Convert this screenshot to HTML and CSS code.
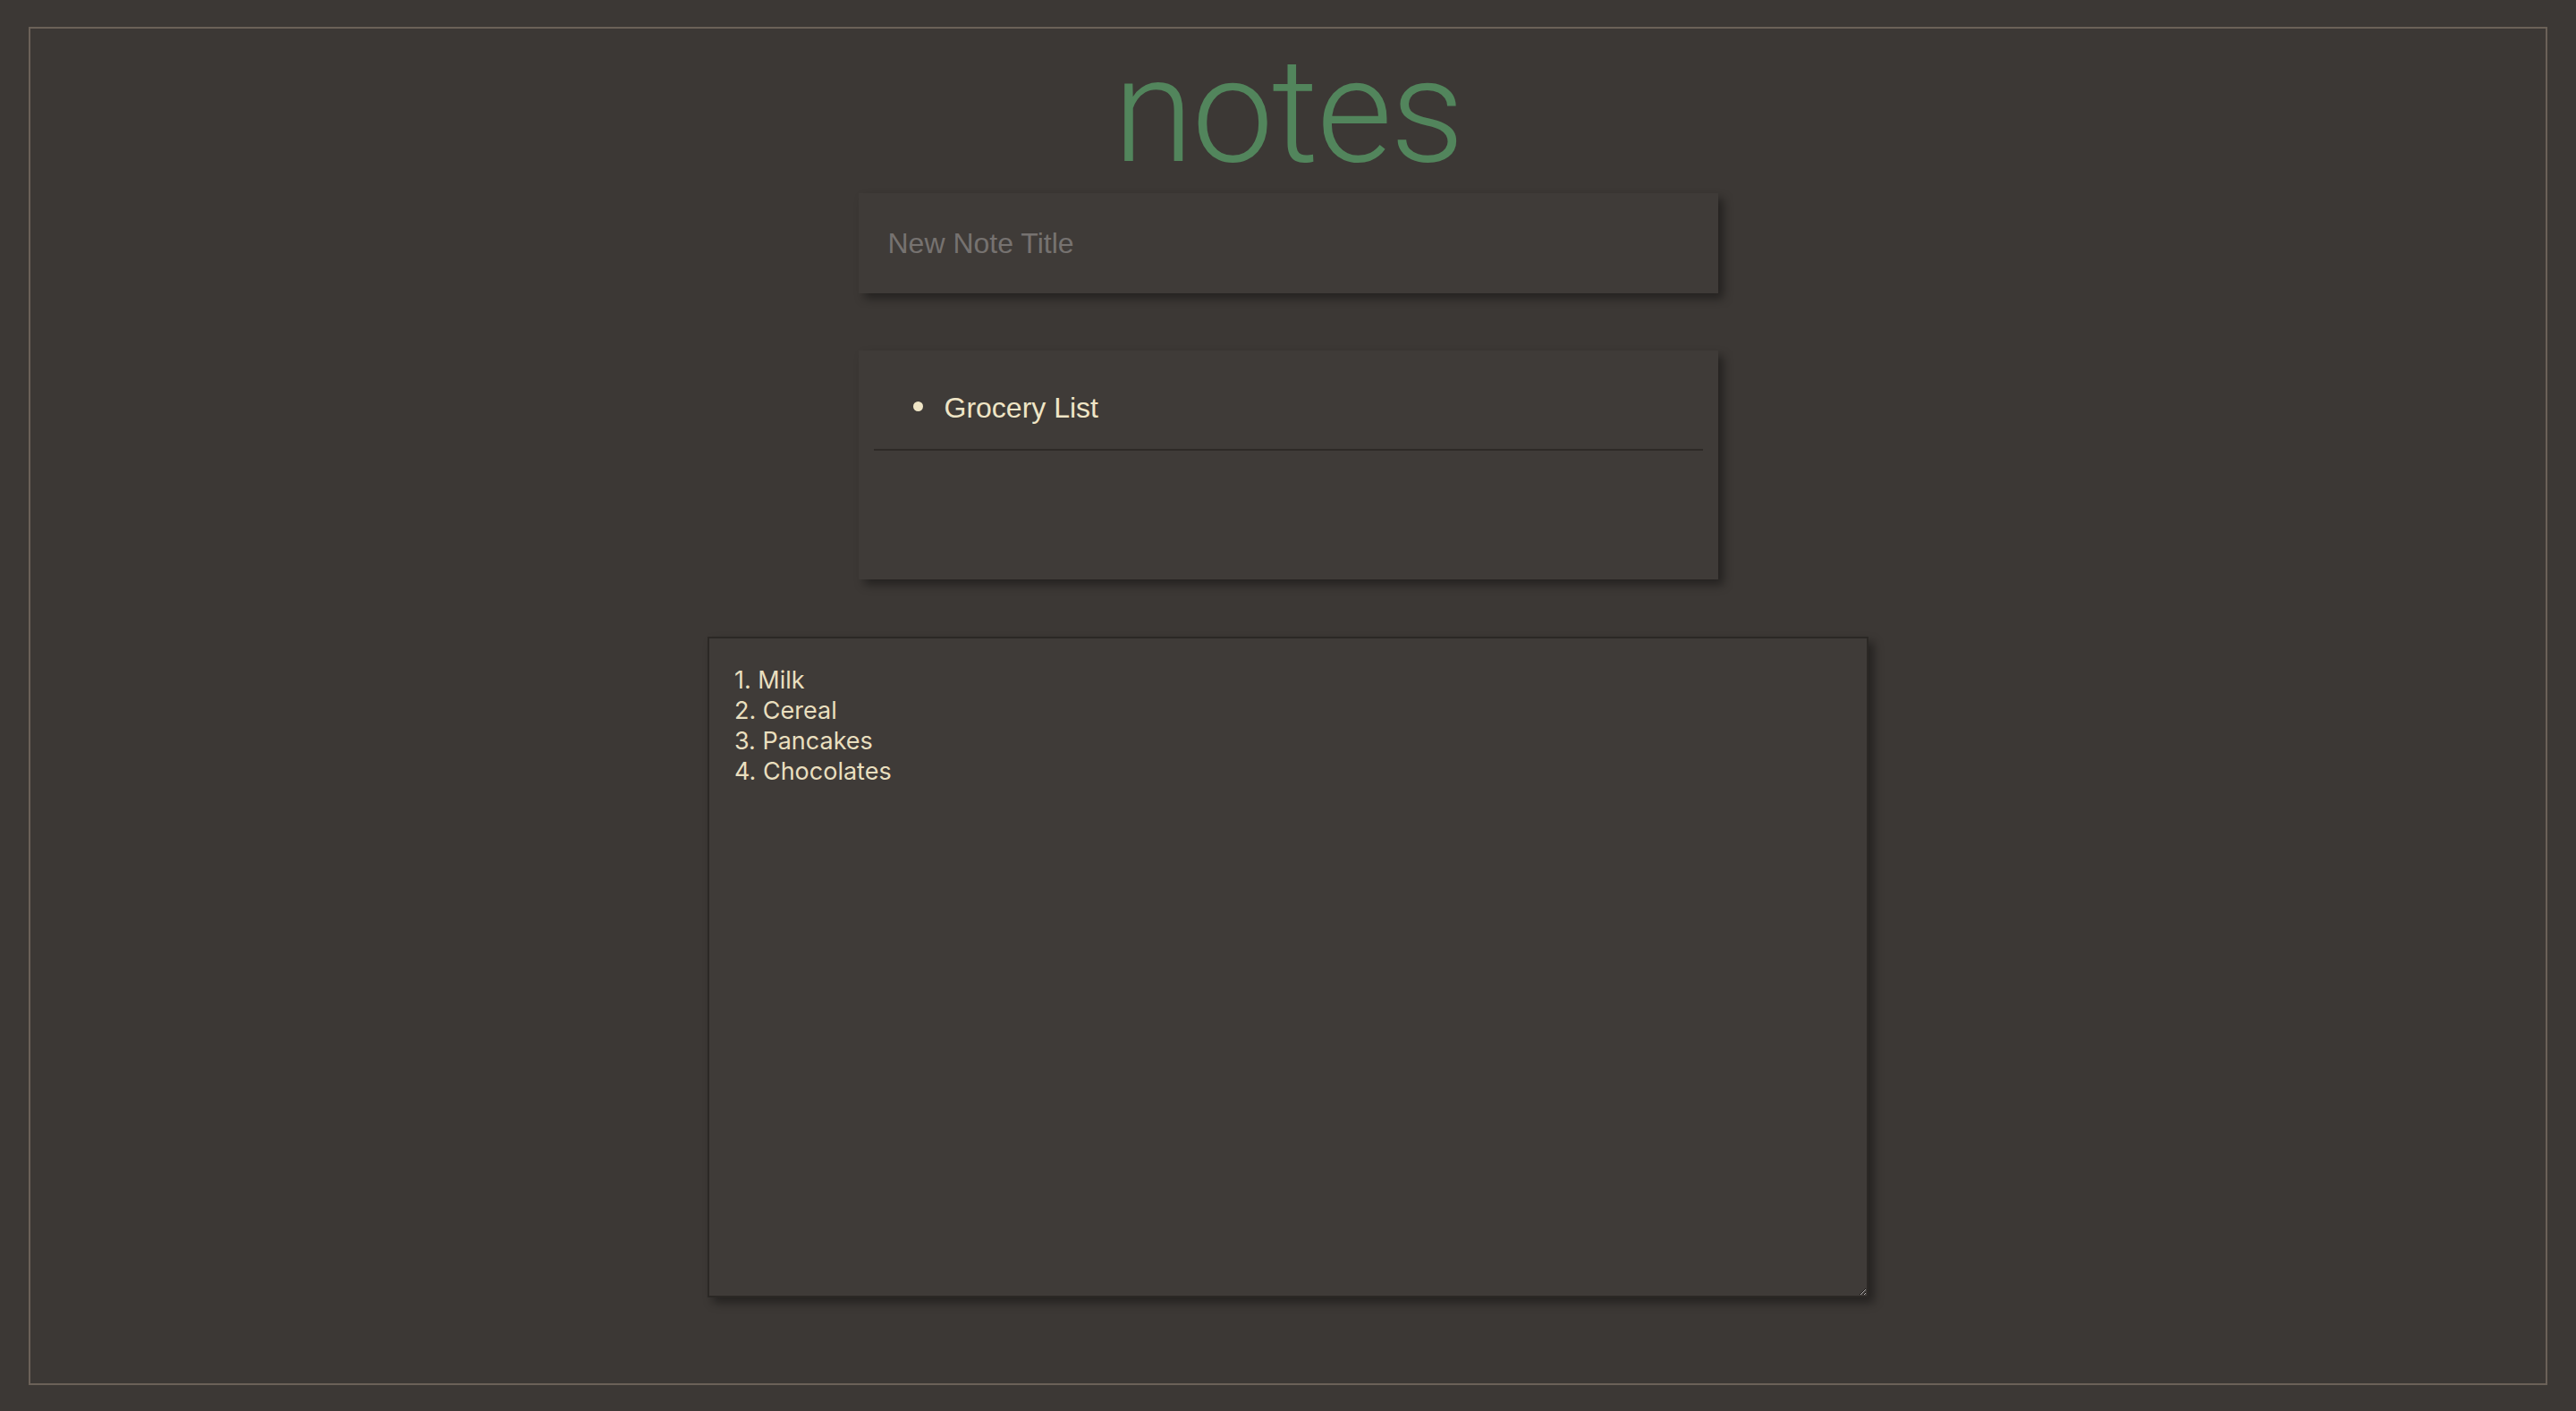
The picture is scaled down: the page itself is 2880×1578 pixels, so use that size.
FILE: index.html
```html
<!DOCTYPE html>
<html lang="en">
<head>
<meta charset="utf-8">
<title>notes</title>
<link rel="stylesheet" href="styles.css">
</head>
<body>
<main class="frame">
  <h1 class="brand">notes</h1>
  <div class="card title-card">
    <input class="title-input" type="text" placeholder="New Note Title">
  </div>
  <div class="card list-card">
    <ul class="note-list">
      <li>Grocery List</li>
    </ul>
    <hr class="divider">
  </div>
  <textarea class="note-body">1. Milk
2. Cereal
3. Pancakes
4. Chocolates</textarea>
</main>
</body>
</html>
```

FILE: styles.css
```css
html, body {
  margin: 0;
  background: #3c3835;
}
body {
  padding: 30px 32px 29px;
  box-sizing: border-box;
  min-height: 100vh;
}
.frame {
  border: 2px solid #6b6158;
  height: 1519px;
  box-sizing: border-box;
  display: flex;
  flex-direction: column;
  align-items: center;
}
.brand {
  margin: 11px 0 10px;
  font-family: Roboto, "Liberation Sans", sans-serif;
  font-weight: 300;
  font-size: 163px;
  line-height: 163px;
  letter-spacing: -2px;
  color: #52855c;
}
.card {
  width: 961px;
  background: #3f3b38;
  box-shadow: 6px 6px 10px rgba(0, 0, 0, 0.4);
  box-sizing: border-box;
}
.title-card {
  height: 112px;
  display: flex;
  align-items: center;
  padding: 0 33px;
}
.title-input {
  flex: 1;
  background: transparent;
  border: none;
  outline: none;
  padding: 0;
  font-family: "Liberation Sans", Arial, sans-serif;
  font-size: 32px;
  color: #efe5c6;
}
.title-input::placeholder {
  color: #767270;
}
.list-card {
  margin-top: 64px;
  height: 256px;
  padding-top: 46px;
}
.note-list {
  margin: 0;
  padding-left: 61px;
  list-style: none;
  font-family: "Liberation Sans", Arial, sans-serif;
  font-size: 32px;
  line-height: 36px;
  color: #efe5c6;
}
.note-list li::before {
  content: "";
  display: inline-block;
  width: 11px;
  height: 11px;
  border-radius: 50%;
  background: #efe5c6;
  margin-right: 24px;
  vertical-align: 7px;
}
.divider {
  margin: 28px 17px 0;
  border: none;
  border-top: 2px solid #2e2a27;
  height: 0;
}
.note-body {
  margin-top: 64px;
  width: 1298px;
  height: 739px;
  box-sizing: border-box;
  padding: 30px 28px;
  background: #3f3b38;
  border: 2px solid #2b2825;
  box-shadow: 6px 6px 10px rgba(0, 0, 0, 0.4);
  color: #e9dfbf;
  color-scheme: dark;
  font-family: Inter, "Noto Sans", sans-serif;
  font-size: 27px;
  line-height: 34px;
  outline: none;
  resize: both;
}
```
